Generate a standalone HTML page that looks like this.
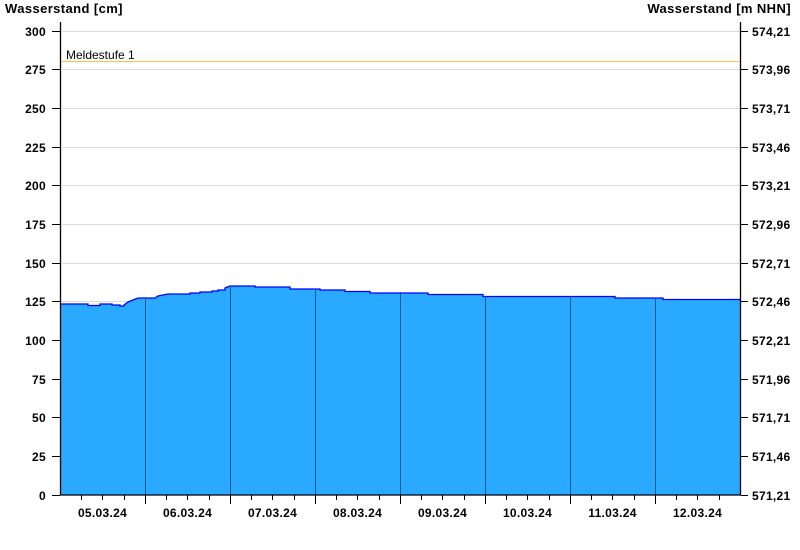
<!DOCTYPE html>
<html><head><meta charset="utf-8"><style>
html,body{margin:0;padding:0;background:#fff}
svg{display:block}
text{font-family:"Liberation Sans",Arial,sans-serif;font-size:12px;font-weight:bold;fill:#000;letter-spacing:0.3px}
.t{font-size:13px;letter-spacing:0.4px}
</style></head><body>
<svg width="800" height="550" viewBox="0 0 800 550" xmlns="http://www.w3.org/2000/svg">
<text class="t" x="5" y="13">Wasserstand [cm]</text>
<text class="t" x="791" y="13" text-anchor="end">Wasserstand [m NHN]</text>
<g stroke="#dcdcdc" stroke-width="1">
<line x1="60" x2="740" y1="456.5" y2="456.5"/><line x1="60" x2="740" y1="417.5" y2="417.5"/>
<line x1="60" x2="740" y1="379.5" y2="379.5"/><line x1="60" x2="740" y1="340.5" y2="340.5"/>
<line x1="60" x2="740" y1="301.5" y2="301.5"/><line x1="60" x2="740" y1="263.5" y2="263.5"/>
<line x1="60" x2="740" y1="224.5" y2="224.5"/><line x1="60" x2="740" y1="185.5" y2="185.5"/>
<line x1="60" x2="740" y1="147.5" y2="147.5"/><line x1="60" x2="740" y1="108.5" y2="108.5"/>
<line x1="60" x2="740" y1="69.5" y2="69.5"/><line x1="60" x2="740" y1="31.5" y2="31.5"/>
</g>
<line x1="60" x2="740" y1="61.5" y2="61.5" stroke="#f0c850"/>
<text x="66" y="59" style="font-weight:normal;font-size:12px;letter-spacing:0">Meldestufe 1</text>
<polygon fill="#29a9ff" stroke="none" points="60,304 88,304 88,305.5 100,305.5 100,304 112,304 112,305 120,305 120,306 124,306 124,305 128,302 133,300 138,298 155,298 158,296 163,295 168,294 190,294 190,293 200,293 200,292 212,292 212,291 218,291 218,290 225,290 225,288 230,286 255,286 255,287 290,287 290,289 320,289 320,290 345,290 345,291.5 370,291.5 370,293 428,293 428,294.5 483,294.5 483,296.5 615,296.5 615,298 663,298 663,299.5 740,299.5 740,495 60,495"/>
<polyline fill="none" stroke="#0000ff" stroke-width="1.3" points="60,304 88,304 88,305.5 100,305.5 100,304 112,304 112,305 120,305 120,306 124,306 124,305 128,302 133,300 138,298 155,298 158,296 163,295 168,294 190,294 190,293 200,293 200,292 212,292 212,291 218,291 218,290 225,290 225,288 230,286 255,286 255,287 290,287 290,289 320,289 320,290 345,290 345,291.5 370,291.5 370,293 428,293 428,294.5 483,294.5 483,296.5 615,296.5 615,298 663,298 663,299.5 740,299.5"/>
<g stroke="#1a5a8a" stroke-width="1">
<line x1="145.5" x2="145.5" y1="298" y2="495"/><line x1="230.5" x2="230.5" y1="286" y2="495"/>
<line x1="315.5" x2="315.5" y1="289" y2="495"/><line x1="400.5" x2="400.5" y1="292" y2="495"/>
<line x1="485.5" x2="485.5" y1="296" y2="495"/><line x1="570.5" x2="570.5" y1="296" y2="495"/>
<line x1="655.5" x2="655.5" y1="298" y2="495"/>
</g>
<g stroke="#000" stroke-width="1.3">
<line x1="60.5" x2="60.5" y1="22" y2="495"/><line x1="740.5" x2="740.5" y1="22" y2="495"/>
<line x1="60" x2="741" y1="495" y2="495"/>
</g>
<g stroke="#000" stroke-width="1">
<line x1="52" x2="60" y1="495.5" y2="495.5"/><line x1="52" x2="60" y1="456.5" y2="456.5"/><line x1="52" x2="60" y1="417.5" y2="417.5"/><line x1="52" x2="60" y1="379.5" y2="379.5"/><line x1="52" x2="60" y1="340.5" y2="340.5"/><line x1="52" x2="60" y1="301.5" y2="301.5"/><line x1="52" x2="60" y1="263.5" y2="263.5"/><line x1="52" x2="60" y1="224.5" y2="224.5"/><line x1="52" x2="60" y1="185.5" y2="185.5"/><line x1="52" x2="60" y1="147.5" y2="147.5"/><line x1="52" x2="60" y1="108.5" y2="108.5"/><line x1="52" x2="60" y1="69.5" y2="69.5"/><line x1="52" x2="60" y1="31.5" y2="31.5"/>
<line x1="741" x2="748" y1="495.5" y2="495.5"/><line x1="741" x2="748" y1="456.5" y2="456.5"/><line x1="741" x2="748" y1="417.5" y2="417.5"/><line x1="741" x2="748" y1="379.5" y2="379.5"/><line x1="741" x2="748" y1="340.5" y2="340.5"/><line x1="741" x2="748" y1="301.5" y2="301.5"/><line x1="741" x2="748" y1="263.5" y2="263.5"/><line x1="741" x2="748" y1="224.5" y2="224.5"/><line x1="741" x2="748" y1="185.5" y2="185.5"/><line x1="741" x2="748" y1="147.5" y2="147.5"/><line x1="741" x2="748" y1="108.5" y2="108.5"/><line x1="741" x2="748" y1="69.5" y2="69.5"/><line x1="741" x2="748" y1="31.5" y2="31.5"/>
<line x1="145.5" x2="145.5" y1="495" y2="504"/><line x1="230.5" x2="230.5" y1="495" y2="504"/><line x1="315.5" x2="315.5" y1="495" y2="504"/><line x1="400.5" x2="400.5" y1="495" y2="504"/><line x1="485.5" x2="485.5" y1="495" y2="504"/><line x1="570.5" x2="570.5" y1="495" y2="504"/><line x1="655.5" x2="655.5" y1="495" y2="504"/>
<line x1="81.5" x2="81.5" y1="495" y2="500"/><line x1="102.5" x2="102.5" y1="495" y2="500"/><line x1="124.5" x2="124.5" y1="495" y2="500"/>
<line x1="166.5" x2="166.5" y1="495" y2="500"/><line x1="187.5" x2="187.5" y1="495" y2="500"/><line x1="209.5" x2="209.5" y1="495" y2="500"/>
<line x1="251.5" x2="251.5" y1="495" y2="500"/><line x1="272.5" x2="272.5" y1="495" y2="500"/><line x1="294.5" x2="294.5" y1="495" y2="500"/>
<line x1="336.5" x2="336.5" y1="495" y2="500"/><line x1="357.5" x2="357.5" y1="495" y2="500"/><line x1="379.5" x2="379.5" y1="495" y2="500"/>
<line x1="421.5" x2="421.5" y1="495" y2="500"/><line x1="442.5" x2="442.5" y1="495" y2="500"/><line x1="464.5" x2="464.5" y1="495" y2="500"/>
<line x1="506.5" x2="506.5" y1="495" y2="500"/><line x1="527.5" x2="527.5" y1="495" y2="500"/><line x1="549.5" x2="549.5" y1="495" y2="500"/>
<line x1="591.5" x2="591.5" y1="495" y2="500"/><line x1="612.5" x2="612.5" y1="495" y2="500"/><line x1="634.5" x2="634.5" y1="495" y2="500"/>
<line x1="676.5" x2="676.5" y1="495" y2="500"/><line x1="697.5" x2="697.5" y1="495" y2="500"/><line x1="719.5" x2="719.5" y1="495" y2="500"/>
</g>
<g text-anchor="end">
<text x="46" y="500">0</text><text x="46" y="461">25</text><text x="46" y="422">50</text><text x="46" y="384">75</text><text x="46" y="345">100</text><text x="46" y="306">125</text><text x="46" y="268">150</text><text x="46" y="229">175</text><text x="46" y="190">200</text><text x="46" y="152">225</text><text x="46" y="113">250</text><text x="46" y="74">275</text><text x="46" y="36">300</text>
</g>
<g>
<text x="752" y="500">571,21</text><text x="752" y="461">571,46</text><text x="752" y="422">571,71</text><text x="752" y="384">571,96</text><text x="752" y="345">572,21</text><text x="752" y="306">572,46</text><text x="752" y="268">572,71</text><text x="752" y="229">572,96</text><text x="752" y="190">573,21</text><text x="752" y="152">573,46</text><text x="752" y="113">573,71</text><text x="752" y="74">573,96</text><text x="752" y="36">574,21</text>
</g>
<g text-anchor="middle">
<text x="102.5" y="517">05.03.24</text><text x="187.5" y="517">06.03.24</text><text x="272.5" y="517">07.03.24</text><text x="357.5" y="517">08.03.24</text><text x="442.5" y="517">09.03.24</text><text x="527.5" y="517">10.03.24</text><text x="612.5" y="517">11.03.24</text><text x="697.5" y="517">12.03.24</text>
</g>
</svg>
</body></html>
